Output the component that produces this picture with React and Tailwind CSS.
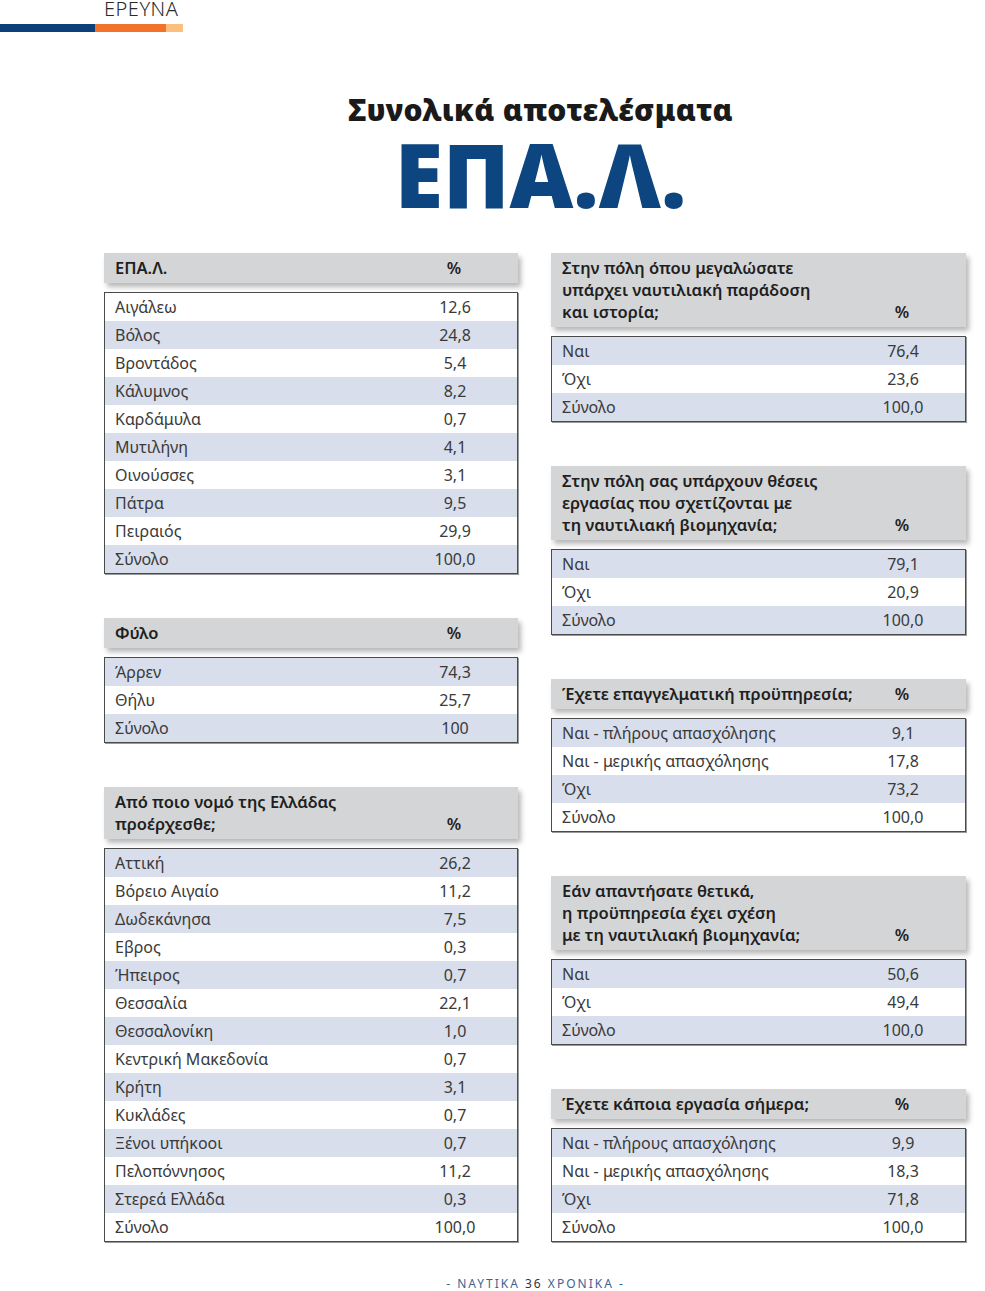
import React from 'react';

const font = { fontFamily: '"Noto Sans", "Open Sans", sans-serif' };

const leftTables = [
  {
    title: ['ΕΠΑ.Λ.'],
    startBlue: false,
    rows: [
      ['Αιγάλεω', '12,6'],
      ['Βόλος', '24,8'],
      ['Βροντάδος', '5,4'],
      ['Κάλυμνος', '8,2'],
      ['Καρδάμυλα', '0,7'],
      ['Μυτιλήνη', '4,1'],
      ['Οινούσσες', '3,1'],
      ['Πάτρα', '9,5'],
      ['Πειραιός', '29,9'],
      ['Σύνολο', '100,0'],
    ],
  },
  {
    title: ['Φύλο'],
    startBlue: true,
    rows: [
      ['Άρρεν', '74,3'],
      ['Θήλυ', '25,7'],
      ['Σύνολο', '100'],
    ],
  },
  {
    title: ['Από ποιο νομό της Ελλάδας', 'προέρχεσθε;'],
    startBlue: true,
    rows: [
      ['Αττική', '26,2'],
      ['Βόρειο Αιγαίο', '11,2'],
      ['Δωδεκάνησα', '7,5'],
      ['Εβρος', '0,3'],
      ['Ήπειρος', '0,7'],
      ['Θεσσαλία', '22,1'],
      ['Θεσσαλονίκη', '1,0'],
      ['Κεντρική Μακεδονία', '0,7'],
      ['Κρήτη', '3,1'],
      ['Κυκλάδες', '0,7'],
      ['Ξένοι υπήκοοι', '0,7'],
      ['Πελοπόννησος', '11,2'],
      ['Στερεά Ελλάδα', '0,3'],
      ['Σύνολο', '100,0'],
    ],
  },
];

const rightTables = [
  {
    title: ['Στην πόλη όπου μεγαλώσατε', 'υπάρχει ναυτιλιακή παράδοση', 'και ιστορία;'],
    startBlue: true,
    rows: [
      ['Ναι', '76,4'],
      ['Όχι', '23,6'],
      ['Σύνολο', '100,0'],
    ],
  },
  {
    title: ['Στην πόλη σας υπάρχουν θέσεις', 'εργασίας που σχετίζονται με', 'τη ναυτιλιακή βιομηχανία;'],
    startBlue: true,
    rows: [
      ['Ναι', '79,1'],
      ['Όχι', '20,9'],
      ['Σύνολο', '100,0'],
    ],
  },
  {
    title: ['Έχετε επαγγελματική προϋπηρεσία;'],
    startBlue: true,
    rows: [
      ['Ναι - πλήρους απασχόλησης', '9,1'],
      ['Ναι - μερικής απασχόλησης', '17,8'],
      ['Όχι', '73,2'],
      ['Σύνολο', '100,0'],
    ],
  },
  {
    title: ['Εάν απαντήσατε θετικά,', 'η προϋπηρεσία έχει σχέση', 'με τη ναυτιλιακή βιομηχανία;'],
    startBlue: true,
    rows: [
      ['Ναι', '50,6'],
      ['Όχι', '49,4'],
      ['Σύνολο', '100,0'],
    ],
  },
  {
    title: ['Έχετε κάποια εργασία σήμερα;'],
    startBlue: true,
    rows: [
      ['Ναι - πλήρους απασχόλησης', '9,9'],
      ['Ναι - μερικής απασχόλησης', '18,3'],
      ['Όχι', '71,8'],
      ['Σύνολο', '100,0'],
    ],
  },
];

function StatTable({ table }) {
  return (
    <div className="flex flex-col">
      <div className="flex items-end bg-[#d4d5d6] py-[4px] pl-[11px] shadow-[3px_4px_5px_rgba(0,0,0,0.28)] text-[16.5px] leading-[22px] font-semibold text-[#1f1f1f]">
        <div className="flex-1 min-w-0 whitespace-nowrap">
          {table.title.map((line, i) => (
            <div key={i}>{line}</div>
          ))}
        </div>
        <div className="w-[100px] flex-none mr-[14px] text-center">%</div>
      </div>
      <div className="mt-[9px] border border-[#4a4a4a] shadow-[1px_1px_0_#9a9a9a]">
        {table.rows.map(([label, value], i) => {
          const blue = table.startBlue ? i % 2 === 0 : i % 2 === 1;
          return (
            <div
              key={i}
              className={
                'flex items-center h-[28px] pl-[10px] text-[16px] text-[#3a3a3a] ' +
                (blue ? 'bg-[#d8deeb]' : 'bg-white')
              }
            >
              <div className="flex-1">{label}</div>
              <div className="w-[100px] mr-[12px] text-center">{value}</div>
            </div>
          );
        })}
      </div>
    </div>
  );
}

export default function App() {
  return (
    <div className="w-[985px] h-[1291px] bg-white overflow-hidden relative" style={font}>
      {/* top label + coloured rule */}
      <div className="h-[24px] overflow-hidden">
        <div className="pl-[104px] -mt-[5px] text-[20px] leading-[28px] font-light text-[#2a2a2a] tracking-[0.5px]">
          ΕΡΕΥΝΑ
        </div>
      </div>
      <div className="flex h-[8px]">
        <div className="w-[95px] bg-[#0d4079]" />
        <div className="w-[71px] bg-[#f2722a]" />
        <div className="w-[17px] bg-[#fbc07f]" />
      </div>

      {/* title */}
      <div className="pl-[96px] mt-[60px] text-center">
        <div className="text-[30px] leading-[36px] font-black text-[#1a1a1a] tracking-[0.3px]">
          Συνολικά αποτελέσματα
        </div>
        <div className="mt-[2px] text-[88px] leading-[88px] font-black text-[#0c4580]">
          ΕΠΑ.Λ.
        </div>
      </div>

      {/* tables */}
      <div className="flex pl-[104px] gap-[33px] mt-[35px]">
        <div className="w-[414px] flex flex-col gap-[44px]">
          {leftTables.map((t, i) => (
            <StatTable key={i} table={t} />
          ))}
        </div>
        <div className="w-[415px] flex flex-col gap-[44px]">
          {rightTables.map((t, i) => (
            <StatTable key={i} table={t} />
          ))}
        </div>
      </div>

      {/* footer */}
      <div className="absolute bottom-[0px] left-0 right-0 pl-[86px] text-center text-[12px] leading-[14px] tracking-[2px] text-[#3a6494]">
        - ΝΑΥΤΙΚΑ <span className="text-[#333]">36</span> ΧΡΟΝΙΚΑ -
      </div>
    </div>
  );
}
